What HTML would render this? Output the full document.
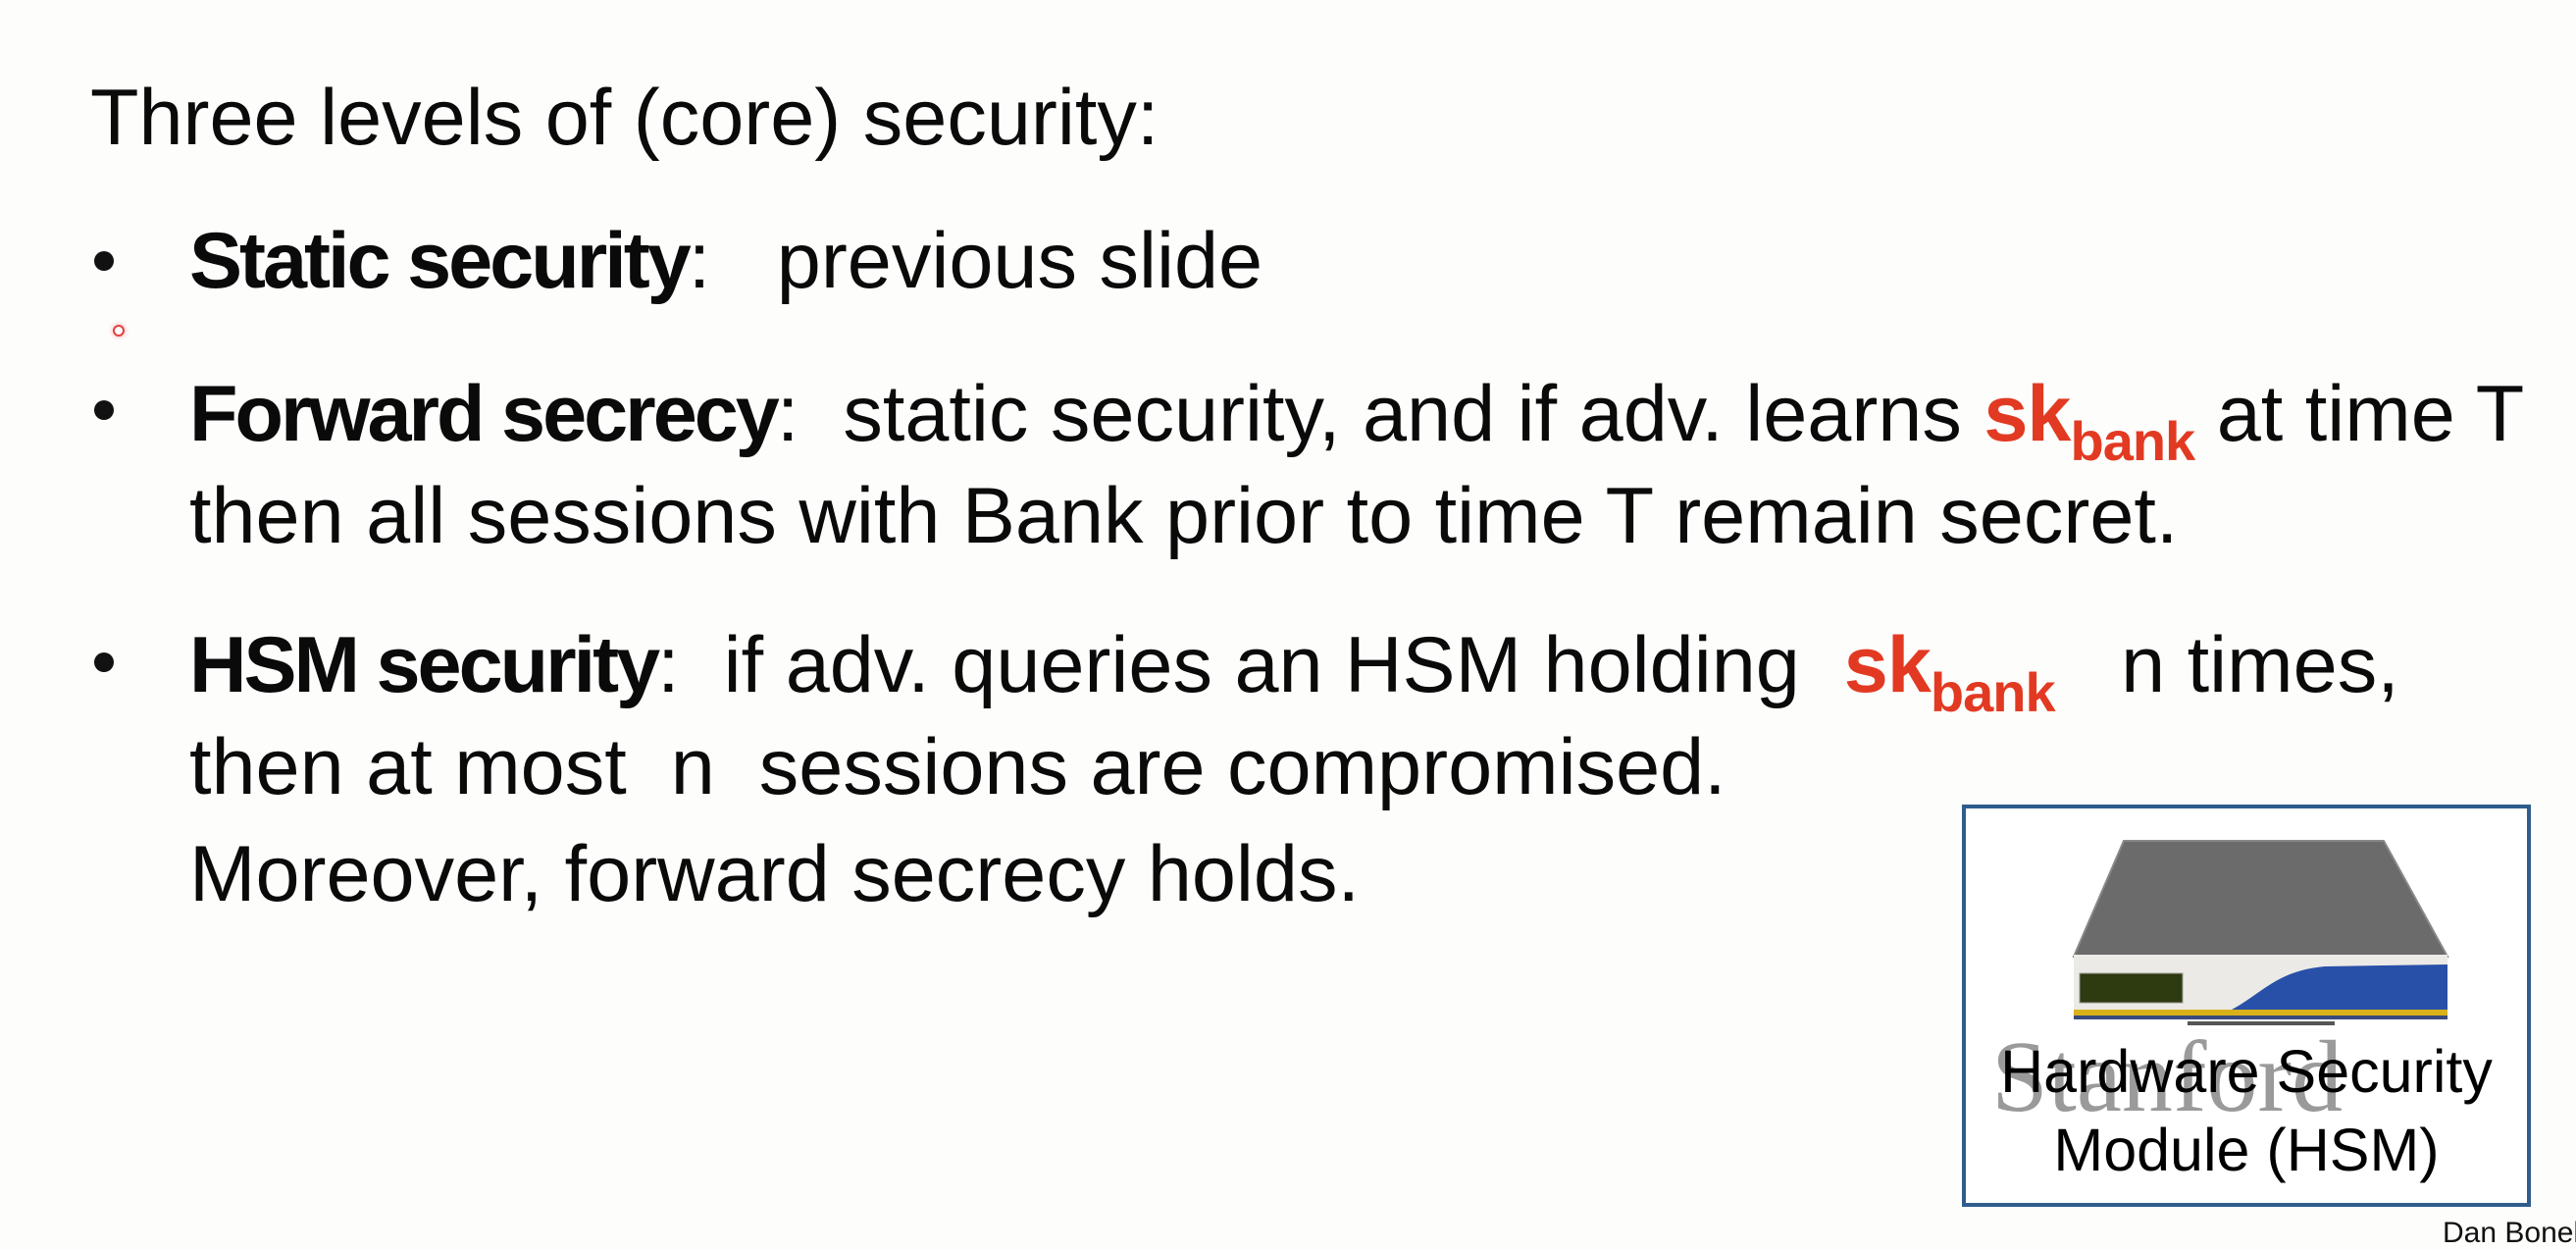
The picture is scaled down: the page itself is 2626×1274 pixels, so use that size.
<!DOCTYPE html>
<html><head><meta charset="utf-8"><style>
html,body{margin:0;padding:0;background:#fdfdfc;}
body{width:2626px;height:1258px;position:relative;overflow:hidden;font-family:"Liberation Sans",sans-serif;color:#0a0a0a;}
.l{position:absolute;white-space:nowrap;font-size:81px;line-height:1;}
.b{font-weight:bold;letter-spacing:-3px;}
.dot{position:absolute;width:20px;height:20px;border-radius:50%;background:#111;}
.r{color:#e23a22;font-weight:bold;letter-spacing:-1px;}
.r sub{font-size:56px;vertical-align:-20px;}
</style></head><body>
<div class="l" style="left:92px;top:80px;">Three levels of (core) security:</div>

<div class="dot" style="left:96px;top:256px;"></div>
<div class="l" style="left:193px;top:226px;"><span class="b">Static security</span>:&nbsp;&nbsp; previous slide</div>

<div style="position:absolute;left:115px;top:331px;width:8px;height:8px;border:2px solid #e04040;border-radius:50%;box-shadow:0 0 6px #f3b0b0;"></div>

<div class="dot" style="left:96px;top:408px;"></div>
<div class="l" style="left:193px;top:382px;"><span class="b">Forward secrecy</span>:&nbsp; static security, and if adv. learns <span class="r">sk<sub>bank</sub></span> at time T</div>
<div class="l" style="left:193px;top:486px;">then all sessions with Bank prior to time T remain secret.</div>

<div class="dot" style="left:96px;top:665px;"></div>
<div class="l" style="left:193px;top:638px;"><span class="b">HSM security</span>:&nbsp; if adv. queries an HSM holding&nbsp; <span class="r">sk<sub>bank</sub></span>&nbsp;&nbsp; n times,</div>
<div class="l" style="left:193px;top:742px;">then at most&nbsp; n&nbsp; sessions are compromised.</div>
<div class="l" style="left:193px;top:851px;">Moreover, forward secrecy holds.</div>

<div style="position:absolute;left:2000px;top:820px;width:572px;height:402px;border:4px solid #2f5d8c;background:#fff;"></div>
<svg style="position:absolute;left:2110px;top:855px;" width="390" height="190" viewBox="0 0 390 190">
<polygon points="55,2 320,2 385,120 4,120" fill="#6b6b6b"/>
<polygon points="55,2 320,2 385,120 4,120" fill="none" stroke="#888" stroke-width="2"/>
<rect x="4" y="118" width="381" height="66" fill="#eceae6"/>
<path d="M140,184 C190,170 200,135 260,130 L385,128 L385,176 L140,176 Z" fill="#2850a8"/>
<rect x="4" y="174" width="381" height="6" fill="#d9b21a"/>
<rect x="4" y="180" width="381" height="4" fill="#3a4a7a"/>
<rect x="10" y="137" width="105" height="30" fill="#2e3a10" stroke="#999"/>
<rect x="120" y="186" width="150" height="4" fill="#555"/>
</svg>
<div style="position:absolute;left:2030px;top:1046px;font-family:'Liberation Serif',serif;font-size:104px;color:#9a9a9a;line-height:1;white-space:nowrap;">Stanford</div>
<div style="position:absolute;left:2004px;top:1052px;width:572px;text-align:center;font-size:61px;line-height:80px;color:#000;white-space:nowrap;">Hardware Security<br>Module (HSM)</div>
<div style="position:absolute;left:2490px;top:1240px;font-size:30px;color:#111;white-space:nowrap;">Dan Boneh</div>
</body></html>
